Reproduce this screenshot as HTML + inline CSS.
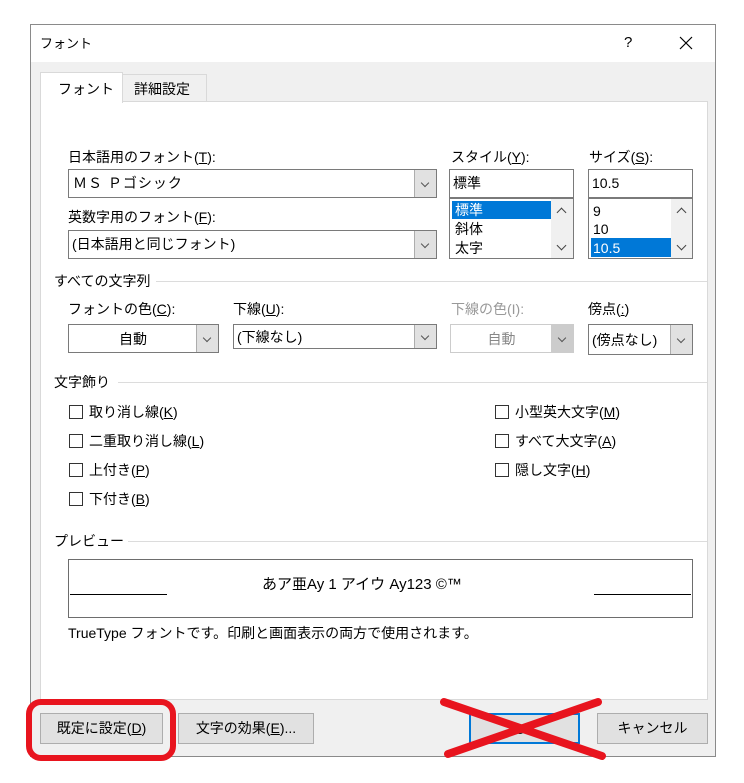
<!DOCTYPE html>
<html><head><meta charset="utf-8"><style>
*{box-sizing:border-box;margin:0;padding:0}
body{width:744px;height:783px;background:#fff;position:relative;overflow:hidden;font-family:"Liberation Sans","Noto Sans CJK JP",sans-serif;font-size:14px;color:#000}
.a{position:absolute;white-space:nowrap}
.t{position:absolute;white-space:nowrap;line-height:18px}
.box{position:absolute;background:#fff;border:1px solid #7a7a7a}
.dd{position:absolute;top:0;bottom:0;right:0;width:22px;background:#e1e1e1;border-left:1px solid #adadad}
.dd:after{content:"";position:absolute;left:7px;top:50%;margin-top:-4px;width:5px;height:5px;border-right:1px solid #555;border-bottom:1px solid #555;transform:rotate(45deg)}
.up,.dn{position:absolute;width:7px;height:7px;border-left:1.5px solid #444;border-top:1.5px solid #444}
.up{transform:rotate(45deg)}
.dn{transform:rotate(225deg)}
.cb{position:absolute;width:14px;height:14px;border:1px solid #333;background:#fff}
.btn{position:absolute;background:#e1e1e1;border:1px solid #adadad;text-align:center;line-height:29px}
.sep{position:absolute;height:1px;background:#dcdcdc}
u{text-decoration:underline}
</style></head><body>
<div class="a" style="left:30px;top:24px;width:686px;height:733px;border:1px solid #8a8a8a;background:#f0f0f0"></div>
<div class="a" style="left:31px;top:25px;width:684px;height:37px;background:#fff"></div>
<div class="t" style="left:40px;top:35px;font-size:13px">フォント</div>
<div class="t" style="left:624px;top:34px;font-size:15px">?</div>
<svg class="a" style="left:679px;top:36px" width="14" height="14"><path d="M1 1L13 13M13 1L1 13" stroke="#000" stroke-width="1.2"/></svg>
<!-- tabs -->
<div class="a" style="left:122px;top:74px;width:85px;height:28px;background:#f0f0f0;border:1px solid #d9d9d9"></div>
<div class="t" style="left:134px;top:80px">詳細設定</div>
<div class="a" style="left:40px;top:101px;width:668px;height:599px;background:#fff;border:1px solid #d9d9d9"></div>
<div class="a" style="left:40px;top:72px;width:83px;height:31px;background:#fff;border:1px solid #d9d9d9;border-bottom:none"></div>
<div class="t" style="left:58px;top:80px">フォント</div>

<div class="t" style="left:68px;top:148px">日本語用のフォント(<u>T</u>):</div>
<div class="t" style="left:451px;top:148px">スタイル(<u>Y</u>):</div>
<div class="t" style="left:589px;top:148px">サイズ(<u>S</u>):</div>
<div class="box" style="left:68px;top:169px;width:369px;height:29px"><div class="t" style="left:4px;top:4px;letter-spacing:1px">ＭＳ Ｐゴシック</div><div class="dd"></div></div>
<div class="box" style="left:449px;top:169px;width:125px;height:29px"><div class="t" style="left:3px;top:4px">標準</div></div>
<div class="box" style="left:588px;top:169px;width:105px;height:29px"><div class="t" style="left:3px;top:4px">10.5</div></div>
<div class="box" style="left:449px;top:198px;width:125px;height:61px;overflow:hidden">
 <div class="a" style="left:2px;top:2px;width:99px;height:18px;background:#0078d7"></div>
 <div class="t" style="left:5px;top:2px;color:#fff">標準</div>
 <div class="t" style="left:5px;top:21px">斜体</div>
 <div class="t" style="left:5px;top:40px">太字</div>
 <div class="a" style="left:101px;top:0;width:22px;height:59px;background:#f0f0f0"></div>
 <div class="up" style="left:108px;top:10px"></div>
 <div class="dn" style="left:108px;top:43px"></div>
</div>
<div class="box" style="left:588px;top:198px;width:105px;height:61px;overflow:hidden">
 <div class="t" style="left:4px;top:3px">9</div>
 <div class="t" style="left:4px;top:21px">10</div>
 <div class="a" style="left:2px;top:39px;width:80px;height:19px;background:#0078d7"></div>
 <div class="t" style="left:4px;top:40px;color:#fff">10.5</div>
 <div class="a" style="left:82px;top:0;width:22px;height:59px;background:#f0f0f0"></div>
 <div class="up" style="left:89px;top:10px"></div>
 <div class="dn" style="left:89px;top:43px"></div>
</div>
<div class="t" style="left:68px;top:208px">英数字用のフォント(<u>F</u>):</div>
<div class="box" style="left:68px;top:230px;width:369px;height:29px"><div class="t" style="left:3px;top:4px">(日本語用と同じフォント)</div><div class="dd"></div></div>

<div class="t" style="left:54px;top:272px">すべての文字列</div>
<div class="sep" style="left:156px;top:281px;width:551px"></div>
<div class="t" style="left:68px;top:300px">フォントの色(<u>C</u>):</div>
<div class="t" style="left:233px;top:300px">下線(<u>U</u>):</div>
<div class="t" style="left:451px;top:300px;color:#999">下線の色(I):</div>
<div class="t" style="left:588px;top:300px">傍点(<u>:</u>)</div>
<div class="box" style="left:68px;top:324px;width:151px;height:29px"><div class="t" style="left:0;width:128px;text-align:center;top:5px">自動</div><div class="dd"></div></div>
<div class="box" style="left:233px;top:324px;width:204px;height:25px"><div class="t" style="left:3px;top:3px">(下線なし)</div><div class="dd"></div></div>
<div class="box" style="left:450px;top:324px;width:124px;height:29px;border-color:#ccc"><div class="t" style="left:0;width:101px;text-align:center;top:5px;color:#888">自動</div><div class="dd" style="background:#ccc;border-color:#ccc"></div></div>
<div class="box" style="left:588px;top:324px;width:105px;height:31px"><div class="t" style="left:3px;top:6px">(傍点なし)</div><div class="dd"></div></div>

<div class="t" style="left:54px;top:373px">文字飾り</div>
<div class="sep" style="left:118px;top:382px;width:589px"></div>
<div class="cb" style="left:69px;top:405px"></div><div class="t" style="left:89px;top:403px">取り消し線(<u>K</u>)</div>
<div class="cb" style="left:69px;top:434px"></div><div class="t" style="left:89px;top:432px">二重取り消し線(<u>L</u>)</div>
<div class="cb" style="left:69px;top:463px"></div><div class="t" style="left:89px;top:461px">上付き(<u>P</u>)</div>
<div class="cb" style="left:69px;top:492px"></div><div class="t" style="left:89px;top:490px">下付き(<u>B</u>)</div>
<div class="cb" style="left:495px;top:405px"></div><div class="t" style="left:515px;top:403px">小型英大文字(<u>M</u>)</div>
<div class="cb" style="left:495px;top:434px"></div><div class="t" style="left:515px;top:432px">すべて大文字(<u>A</u>)</div>
<div class="cb" style="left:495px;top:463px"></div><div class="t" style="left:515px;top:461px">隠し文字(<u>H</u>)</div>

<div class="t" style="left:54px;top:532px">プレビュー</div>
<div class="sep" style="left:128px;top:541px;width:579px"></div>
<div class="a" style="left:68px;top:559px;width:625px;height:59px;border:1px solid #6d6d6d;background:#fff"></div>
<div class="a" style="left:70px;top:594px;width:97px;height:1px;background:#000"></div>
<div class="a" style="left:594px;top:594px;width:97px;height:1px;background:#000"></div>
<div class="t" style="left:262px;top:576px;font-size:15px">あア亜Ay 1 アイウ Ay123 ©™</div>
<div class="t" style="left:68px;top:624px">TrueType フォントです。印刷と画面表示の両方で使用されます。</div>

<div class="btn" style="left:40px;top:713px;width:123px;height:31px">既定に設定(<u>D</u>)</div>
<div class="btn" style="left:178px;top:713px;width:136px;height:31px">文字の効果(<u>E</u>)...</div>
<div class="btn" style="left:469px;top:713px;width:111px;height:31px;border:2px solid #0078d7">OK</div>
<div class="btn" style="left:597px;top:713px;width:111px;height:31px">キャンセル</div>

<svg class="a" style="left:0;top:0" width="744" height="783">
<rect x="29" y="702" width="144" height="56" rx="12" fill="none" stroke="#e8141e" stroke-width="6"/>
<line x1="444" y1="702" x2="602" y2="756" stroke="#e8141e" stroke-width="8" stroke-linecap="round"/>
<line x1="598" y1="702" x2="448" y2="754" stroke="#e8141e" stroke-width="8" stroke-linecap="round"/>
</svg>
</body></html>
